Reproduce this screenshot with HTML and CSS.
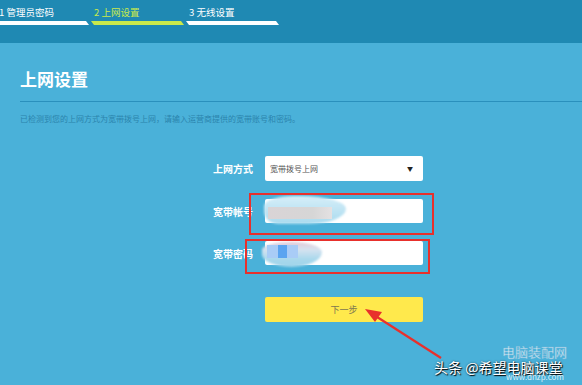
FILE: index.html
```html
<!DOCTYPE html>
<html lang="zh-CN">
<head>
  <meta charset="UTF-8">
  <meta name="viewport" content="width=device-width, initial-scale=1.0">
  <title>上网设置</title>
  <link rel="stylesheet" href="styles.css">
</head>
<body>
  <div id="app">
    <div id="header">
      <div class="step done">
        <span class="step-label">1 管理员密码</span>
        <div class="step-bar"></div>
      </div>
      <div class="step current">
        <span class="step-label">2 上网设置</span>
        <div class="step-bar"></div>
      </div>
      <div class="step">
        <span class="step-label">3 无线设置</span>
        <div class="step-bar"></div>
      </div>
    </div>

    <div id="main">
      <h1 id="title">上网设置</h1>
      <p id="hint">已检测到您的上网方式为宽带拨号上网，请输入运营商提供的宽带账号和密码。</p>

      <div id="form">
        <label class="field-label">上网方式</label>
        <div class="select">
          <span>宽带拨号上网</span>
          <span class="caret">&#x25BC;</span>
        </div>

        <label class="field-label">宽带帐号</label>
        <div class="input"></div>

        <label class="field-label">宽带密码</label>
        <div class="input"></div>

        <div></div>
        <button class="next" type="button">下一步</button>
      </div>
    </div>

    <!-- annotations drawn over the screenshot -->
    <div class="smudge smudge-a"></div>
    <div class="pixels pixels-a"></div>
    <div class="smudge smudge-b"></div>
    <div class="pixels pixels-b"><i></i><i class="mid"></i><i></i></div>

    <div class="mark mark-a"></div>
    <div class="mark mark-b"></div>

    <svg class="arrow" width="582" height="385" viewBox="0 0 582 385">
      <line x1="441" y1="358" x2="374" y2="315" stroke="#e8302c" stroke-width="2.2"/>
      <polygon points="365,309 382,312 375,322" fill="#e8302c"/>
    </svg>

    <div class="watermark">
      <span class="wm-site">电脑装配网</span>
      <span class="wm-author">头条 @希望电脑课堂</span>
      <span class="wm-url">www.dnzp.com</span>
    </div>
  </div>
</body>
</html>
```

FILE: styles.css
```css
* {
  box-sizing: border-box;
}

:root {
  --header-bg: #1f89b3;
  --main-bg: #4ab1d9;
  --rule: #2a90bd;
  --hint: #2a84ad;
  --current: #c9e94b;
  --mark: #e8302c;
}

html, body {
  margin: 0;
  height: 100%;
  font-family: "Noto Sans CJK SC", "Noto Sans", sans-serif;
  background: var(--main-bg);
  color: #fff;
}

#app {
  position: relative;
  width: 582px;
  height: 385px;
  overflow: hidden;
}

#header {
  height: 43px;
  background: var(--header-bg);
  display: flex;
  margin-left: -4px;
  padding-top: 5px;
}

.step {
  width: 95px;
  display: flex;
  flex-direction: column;
}

.step-label {
  font-size: 9.5px;
  line-height: 14px;
  padding-left: 3px;
  height: 16px;
}

.step.current .step-label {
  color: var(--current);
}

.step-bar {
  height: 4px;
  margin-right: 2px;
  background: #fff;
  clip-path: polygon(0 0, calc(100% - 3px) 0, 100% 100%, 3px 100%);
}

.step.current .step-bar {
  background: var(--current);
}

#main {
  padding: 25px 0 0 20px;
}

#title {
  margin: 0;
  font-size: 17px;
  line-height: 22px;
  font-weight: bold;
  padding-bottom: 11px;
  border-bottom: 1px solid var(--rule);
}

#hint {
  margin: 11px 0 0;
  font-size: 8px;
  line-height: 12px;
  color: var(--hint);
}

#form {
  margin-top: 31px;
  display: grid;
  grid-template-columns: 233px 158px;
  column-gap: 12px;
  row-gap: 18px;
  align-items: center;
}

.field-label {
  text-align: right;
  font-size: 10px;
  font-weight: bold;
}

.select,
.input {
  height: 24px;
  background: #fff;
  border-radius: 2px;
}

.select {
  height: 25px;
  display: flex;
  align-items: center;
  justify-content: space-between;
  padding: 0 10px 0 5px;
  font-size: 8px;
  color: #555;
}

.caret {
  font-size: 6px;
  color: #222;
}

.next {
  margin-top: 14px;
  height: 25px;
  border: 0;
  border-radius: 2px;
  background: #ffe94c;
  color: #7d7650;
  font: inherit;
  font-size: 9px;
}

.mark {
  position: absolute;
  border: 2px solid var(--mark);
}

.mark-a {
  left: 249px;
  top: 193px;
  width: 185px;
  height: 42px;
}

.mark-b {
  left: 245px;
  top: 239px;
  width: 185px;
  height: 35px;
}

.smudge {
  position: absolute;
  background: #a9dbef;
  filter: blur(1px);
}

.smudge-a {
  left: 264px;
  top: 196px;
  width: 82px;
  height: 28px;
  border-radius: 40% 60% 50% 20% / 40% 50% 60% 50%;
  background: linear-gradient(#d6eef8, #a9dbef);
}

.pixels {
  position: absolute;
  display: flex;
}

.pixels-a {
  left: 268px;
  top: 207px;
  width: 64px;
  height: 12px;
  background: linear-gradient(90deg, #d9d4d6, #d6d6d6 70%, #e4e1e2);
}

.smudge-b {
  left: 262px;
  top: 242px;
  width: 60px;
  height: 25px;
  border-radius: 50% 50% 50% 50% / 30% 40% 60% 50%;
  background: linear-gradient(#e3c9d6 0%, #d6e3f0 30%, #a8d8ec 70%, #9fd4ea);
}

.pixels-b {
  left: 267px;
  top: 245px;
  height: 13px;
}

.pixels-b i {
  width: 11px;
  background: #a9ccf6;
}

.pixels-b i.mid {
  width: 9px;
  background: #5aa4f0;
}

.arrow {
  position: absolute;
  left: 0;
  top: 0;
}

.watermark {
  position: absolute;
  left: 434px;
  top: 344px;
  width: 140px;
  height: 40px;
}

.wm-site {
  position: absolute;
  left: 68px;
  top: 1px;
  font-size: 13px;
  line-height: 14px;
  color: rgba(255, 255, 255, 0.85);
  -webkit-text-stroke: 0.4px #6fb6d8;
}

.wm-url {
  position: absolute;
  left: 72px;
  top: 28px;
  font-size: 8px;
  line-height: 9px;
  color: rgba(255, 255, 255, 0.8);
}

.wm-author {
  position: absolute;
  left: 0;
  top: 15px;
  font-size: 14px;
  line-height: 17px;
  color: #fff;
  text-shadow: 1px 1px 1px #000, 0 0 2px rgba(0, 0, 0, 0.6);
  white-space: nowrap;
}
```
